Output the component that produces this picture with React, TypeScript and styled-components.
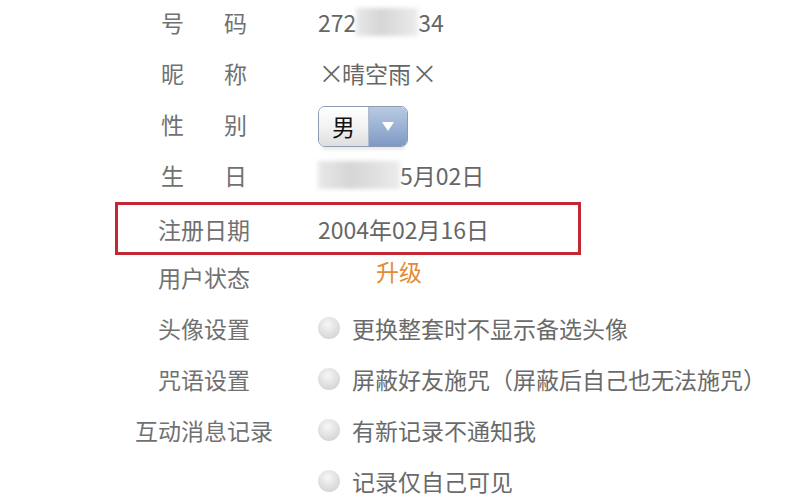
import React from 'react';
import styled, { createGlobalStyle } from 'styled-components';

interface iRow {
  label: string;
  spread?: boolean;
}

const GlobalStyle = createGlobalStyle`
  html, body {
    margin: 0;
    padding: 0;
    background: #ffffff;
  }
  body {
    font-family: "Noto Sans CJK SC", "Noto Sans", sans-serif;
    color: #666666;
  }
`;

const options = [
  '更换整套时不显示备选头像',
  '屏蔽好友施咒（屏蔽后自己也无法施咒）',
  '有新记录不通知我',
  '记录仅自己可见',
];

const Label = ({ label, spread }: iRow) => (
  <LabelCell>
    <LabelText $spread={spread}>
      {spread ? label.split('').map((c, i) => <span key={i}>{c}</span>) : label}
    </LabelText>
  </LabelCell>
);

const App = () => {
  return (
    <>
      <GlobalStyle />
      <Page>
        <Row>
          <Label label="号码" spread />
          <Value>
            272
            <Blur $width={62} />
            34
          </Value>
        </Row>
        <Row>
          <Label label="昵称" spread />
          <Value>
            <Cross>×</Cross>晴空雨<Cross>×</Cross>
          </Value>
        </Row>
        <Row>
          <Label label="性别" spread />
          <Value>
            <Select>
              <SelectText>男</SelectText>
              <SelectArrow>
                <svg width="14" height="11" viewBox="0 0 14 11">
                  <path d="M1 1 H13 L7 10 Z" fill="#ffffff" />
                </svg>
              </SelectArrow>
            </Select>
          </Value>
        </Row>
        <Row>
          <Label label="生日" spread />
          <Value>
            <Blur $width={82} />
            5月02日
          </Value>
        </Row>
        <Row $boxed>
          <Label label="注册日期" />
          <Value>2004年02月16日</Value>
        </Row>
        <Row>
          <Label label="用户状态" />
          <Value>
            <Upgrade>升级</Upgrade>
          </Value>
        </Row>
        {options.map((text, i) => (
          <Row key={text}>
            <Label label={['头像设置', '咒语设置', '互动消息记录', ''][i]} />
            <Value>
              <Radio />
              <OptionText>{text}</OptionText>
            </Value>
          </Row>
        ))}
      </Page>
    </>
  );
};

export default App;

const Page = styled.div`
  width: 800px;
  height: 500px;
  overflow: hidden;
  background: #ffffff;
`;

const Row = styled.div<{ $boxed?: boolean }>`
  display: flex;
  align-items: center;
  box-sizing: border-box;
  height: ${p => (p.$boxed ? '53px' : '51px')};
  margin-top: ${p => (p.$boxed ? '-2px' : '0')};
  margin-left: ${p => (p.$boxed ? '115px' : '0')};
  width: ${p => (p.$boxed ? '466px' : 'auto')};
  padding-left: ${p => (p.$boxed ? '17px' : '135px')};
  border: ${p => (p.$boxed ? '3px solid #c22733' : 'none')};
  padding-top: ${p => (p.$boxed ? '1px' : '0')};
  padding-bottom: ${p => (p.$boxed ? '0' : '7px')};
`;

const LabelCell = styled.div`
  width: 138px;
  display: flex;
  justify-content: center;
  flex-shrink: 0;
`;

const LabelText = styled.div<{ $spread?: boolean }>`
  width: ${p => (p.$spread ? '86px' : 'auto')};
  display: flex;
  justify-content: space-between;
  font-size: 23px;
  line-height: 30px;
  color: #717171;
  white-space: nowrap;
`;

const Value = styled.div`
  margin-left: 45px;
  display: flex;
  align-items: center;
  font-size: 23px;
  line-height: 30px;
  color: #666666;
  white-space: nowrap;
`;

const Blur = styled.span<{ $width: number }>`
  display: inline-block;
  width: ${p => p.$width}px;
  height: 28px;
  background: linear-gradient(90deg, #e8e8e8, #d6d6d6 40%, #e0e0e0 70%, #ececec);
  filter: blur(2px);
`;

const Cross = styled.span`
  display: inline-block;
  width: 24px;
  text-align: center;
  font-family: "DejaVu Sans", sans-serif;
  font-size: 32px;
  font-weight: 200;
  line-height: 30px;
  color: #666666;
`;

const Select = styled.div`
  display: flex;
  height: 39px;
  margin-top: 4px;
  border: 1px solid #8d9bb1;
  border-radius: 7px;
  overflow: hidden;
  box-shadow: 0 6px 3px -3px rgba(0, 0, 0, 0.08);
`;

const SelectText = styled.div`
  width: 49px;
  display: flex;
  align-items: center;
  justify-content: center;
  background: linear-gradient(#ffffff, #f3f3f3 50%, #dedede);
  border-right: 1px solid #b0bccd;
  color: #111111;
  font-size: 23px;
`;

const SelectArrow = styled.div`
  width: 38px;
  display: flex;
  align-items: center;
  justify-content: center;
  background: linear-gradient(#b9cae2, #9cb3d4 50%, #7e99c2);
`;

const Upgrade = styled.span`
  margin-left: 58px;
  margin-bottom: 13px;
  color: #e48a36;
  font-size: 23px;
`;

const Radio = styled.span`
  width: 22px;
  height: 22px;
  border-radius: 50%;
  background: radial-gradient(circle at 45% 35%, #f7f7f7, #dcdcdc 60%, #c9c9c9);
  flex-shrink: 0;
`;

const OptionText = styled.span`
  margin-left: 12px;
  color: #6a6a6a;
`;
